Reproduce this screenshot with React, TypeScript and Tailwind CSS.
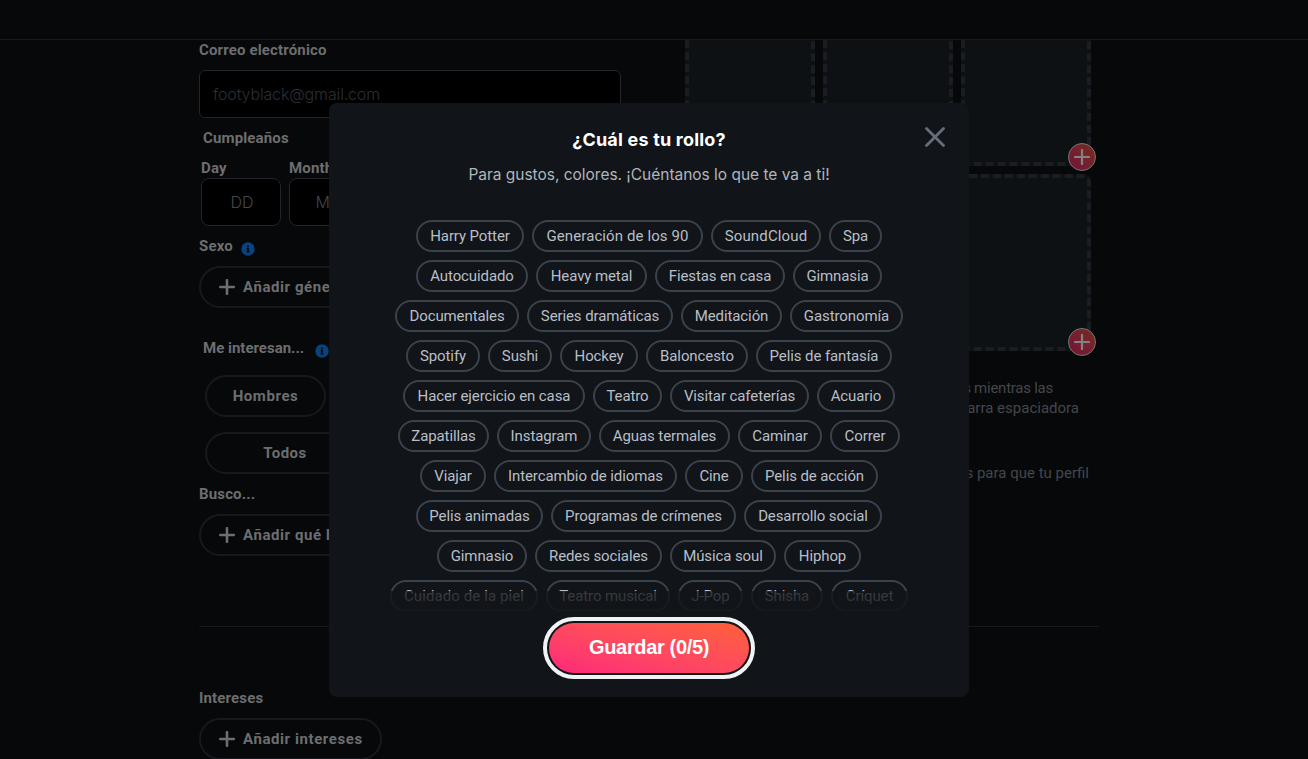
import type { ReactNode } from "react";

const rows: [string, string][][] = [
  [["Harry Potter", "w-[108px]"], ["Generación de los 90", "w-[171px] tracking-[0.1px]"], ["SoundCloud", "w-[110px] tracking-[0.15px]"], ["Spa", "w-[53px]"]],
  [["Autocuidado", "w-[112px]"], ["Heavy metal", "w-[111px]"], ["Fiestas en casa", "w-[130px]"], ["Gimnasia", "w-[89px]"]],
  [["Documentales", "w-[124px]"], ["Series dramáticas", "w-[146px]"], ["Meditación", "w-[101px]"], ["Gastronomía", "w-[113px]"]],
  [["Spotify", "w-[74px]"], ["Sushi", "w-[64px]"], ["Hockey", "w-[78px]"], ["Baloncesto", "w-[102px]"], ["Pelis de fantasía", "w-[136px]"]],
  [["Hacer ejercicio en casa", "w-[182px]"], ["Teatro", "w-[69px]"], ["Visitar cafeterías", "w-[139px]"], ["Acuario", "w-[78px]"]],
  [["Zapatillas", "w-[91px]"], ["Instagram", "w-[94px]"], ["Aguas termales", "w-[131px]"], ["Caminar", "w-[84px]"], ["Correr", "w-[70px]"]],
  [["Viajar", "w-[66px]"], ["Intercambio de idiomas", "w-[183px]"], ["Cine", "w-[58px]"], ["Pelis de acción", "w-[127px]"]],
  [["Pelis animadas", "w-[127px]"], ["Programas de crímenes", "w-[185px]"], ["Desarrollo social", "w-[138px]"]],
  [["Gimnasio", "w-[90px]"], ["Redes sociales", "w-[127px]"], ["Música soul", "w-[106px]"], ["Hiphop", "w-[77px]"]],
  [["Cuidado de la piel", "w-[148px] tracking-[0.1px]"], ["Teatro musical", "w-[124px]"], ["J-Pop", "w-[65px]"], ["Shisha", "w-[72px]"], ["Críquet", "w-[77px]"]],
];

function Label({ children, className = "" }: { children: ReactNode; className?: string }) {
  return (
    <div className={`flex h-5 items-center whitespace-nowrap text-[15px] font-bold tracking-[0.15px] text-[#6d6e70] ${className}`}>
      {children}
    </div>
  );
}

function Info({ className = "" }: { className?: string }) {
  return (
    <svg className={`h-[14px] w-[14px] ${className}`} viewBox="0 0 14 14">
      <circle cx="7" cy="7" r="6.7" fill="#08427f" />
      <rect x="6.1" y="3.6" width="1.8" height="1.6" fill="#060809" />
      <path d="M5.6 6h2.3v3.4h.7v1H5.5v-1h.7V7h-.6z" fill="#060809" />
    </svg>
  );
}

function AddButton({ children, className }: { children: ReactNode; className: string }) {
  return (
    <div className={`flex h-[42px] items-center rounded-full border-2 border-[#17191f] pl-[18px] text-[15px] font-bold tracking-[0.58px] text-[#6d6e70] ${className}`}>
      <svg className="mr-2 h-4 w-4 shrink-0" viewBox="0 0 16 16">
        <path d="M8 1.2v13.6M1.2 8h13.6" stroke="#6d6e70" strokeWidth="2.6" strokeLinecap="round" />
      </svg>
      <span className="whitespace-nowrap">{children}</span>
    </div>
  );
}

function Photo({ add = false }: { add?: boolean }) {
  return (
    <div className="relative h-[177px] w-[130px] rounded-lg border-4 border-dashed border-[#1a1d21] bg-[#0d1114]">
      {add && (
        <div className="absolute -right-[9px] -bottom-[9px] flex h-7 w-7 items-center justify-center rounded-full border border-[#777] bg-linear-to-tr from-[#74103a] to-[#772b1c]">
          <svg className="h-4 w-4" viewBox="0 0 16 16">
            <path d="M8 1v14M1 8h14" stroke="#838383" strokeWidth="2.2" strokeLinecap="round" />
          </svg>
        </div>
      )}
    </div>
  );
}

export default function App() {
  return (
    <div className="relative h-[759px] w-[1308px] overflow-hidden bg-[#060809] font-['Roboto','Liberation_Sans',sans-serif]">
      <header className="h-10 border-b border-[#191b1f]" />
      <main className="flex h-[719px] flex-col overflow-hidden pl-[199px]">
        <div className="flex h-[586px] shrink-0">
          <section className="w-[486px] shrink-0">
            <Label>Correo electrónico</Label>
            <div className="mt-2.5 flex h-12 w-[422px] items-center rounded-md border border-[#222529] bg-black pl-[13px] font-['Inter',sans-serif] text-[16px] font-light tracking-[-0.15px] text-[#2b2f35]">
              footyblack@gmail.com
            </div>
            <Label className="mt-2.5 pl-1">Cumpleaños</Label>
            <div className="mt-2.5 flex gap-2 pl-0.5">
              <div className="w-20">
                <Label>Day</Label>
                <div className="flex h-12 items-center justify-center rounded-lg border border-[#222529] bg-black pl-0.5 font-['Inter',sans-serif] text-[16px] font-light text-[#44474b]">DD</div>
              </div>
              <div className="w-20">
                <Label>Month</Label>
                <div className="flex h-12 items-center justify-center rounded-lg border border-[#222529] bg-black pl-0.5 font-['Inter',sans-serif] text-[16px] font-light text-[#44474b]">MM</div>
              </div>
            </div>
            <Label className="mt-2.5">
              Sexo <Info className="mt-1.5 ml-2" />
            </Label>
            <AddButton className="mt-2.5 w-[190px]">Añadir género</AddButton>
            <Label className="mt-[30px] pl-1 tracking-normal">
              Me interesan... <Info className="mt-1.5 ml-[11px]" />
            </Label>
            <div className="mt-[17px] ml-1.5 flex h-[42px] w-[121px] items-center justify-center rounded-full border-2 border-[#17191f] text-[15px] font-bold tracking-[0.58px] text-[#6d6e70]">Hombres</div>
            <div className="mt-[15px] ml-1.5 flex h-[42px] w-[160px] items-center justify-center rounded-full border-2 border-[#17191f] text-[15px] font-bold tracking-[0.45px] text-[#6d6e70]">Todos</div>
            <Label className="mt-2.5">Busco...</Label>
            <AddButton className="mt-2.5 w-[200px]">Añadir qué busco</AddButton>
          </section>
          <section className="w-[406px]">
            <div className="-mt-[51px] grid grid-cols-3 gap-2">
              <Photo /><Photo /><Photo add />
              <Photo /><Photo /><Photo add />
            </div>
            <div className="mt-[27px] text-right text-[15px] leading-5 text-[#44474c]">
              <p className="pr-[38px] tracking-[-0.25px]">s mientras las</p>
              <p className="pr-[12px]">barra espaciadora</p>
              <p className="mt-[45px] pr-[2px]">s para que tu perfil</p>
            </div>
          </section>
        </div>
        <div className="w-[900px] shrink-0 border-t border-[#17191f]" />
        <Label className="mt-[61px] shrink-0">Intereses</Label>
        <AddButton className="mt-2.5 w-[183px] shrink-0">Añadir intereses</AddButton>
      </main>

      <div role="dialog" className="absolute top-[103px] left-[329px] flex h-[594px] w-[640px] flex-col items-center rounded-lg bg-[#111418]">
        <svg className="absolute top-6 right-6 h-5 w-5" viewBox="0 0 20 20">
          <path d="M1.5 1.5l17 17M18.5 1.5l-17 17" stroke="#656e7b" strokeWidth="2.8" strokeLinecap="round" />
        </svg>
        <h1 className="mt-[25px] h-6 font-['Inter',sans-serif] text-[18px] leading-6 font-bold tracking-[0.2px] whitespace-nowrap text-white">¿Cuál es tu rollo?</h1>
        <p className="mt-[11px] h-6 font-['Inter',sans-serif] text-[15.5px] leading-6 font-normal tracking-[-0.02px] whitespace-nowrap text-[#b0b6bf]">
          Para gustos, colores. ¡Cuéntanos lo que te va a ti!
        </p>
        <div className="relative mt-[33px] flex h-[391px] shrink-0 flex-col gap-2 overflow-hidden tracking-[-0.1px]">
          {rows.map((row, i) => (
            <div key={i} className="flex shrink-0 justify-center gap-2">
              {row.map(([text, width]) => (
                <div key={text} className={`flex h-8 shrink-0 items-center justify-center rounded-full border-2 border-[#3a424c] text-[15px] whitespace-nowrap text-[#b9bfc8] ${width}`}>
                  {text}
                </div>
              ))}
            </div>
          ))}
          <div className="absolute inset-x-0 bottom-0 h-5 bg-linear-to-b from-[#111418]/75 to-[#111418]/88" />
        </div>
        <button className="mt-1.5 flex h-[62px] w-[212px] shrink-0 items-center justify-center rounded-full border-4 border-[#f0f2f4] p-0.5">
          <span className="flex h-[50px] w-[200px] items-center justify-center rounded-full bg-linear-to-tr from-[#fd267a] to-[#ff6036] pb-0.5 font-['Liberation_Sans',sans-serif] text-[20px] font-bold tracking-[-0.35px] text-white">
            Guardar (0/5)
          </span>
        </button>
      </div>
    </div>
  );
}
